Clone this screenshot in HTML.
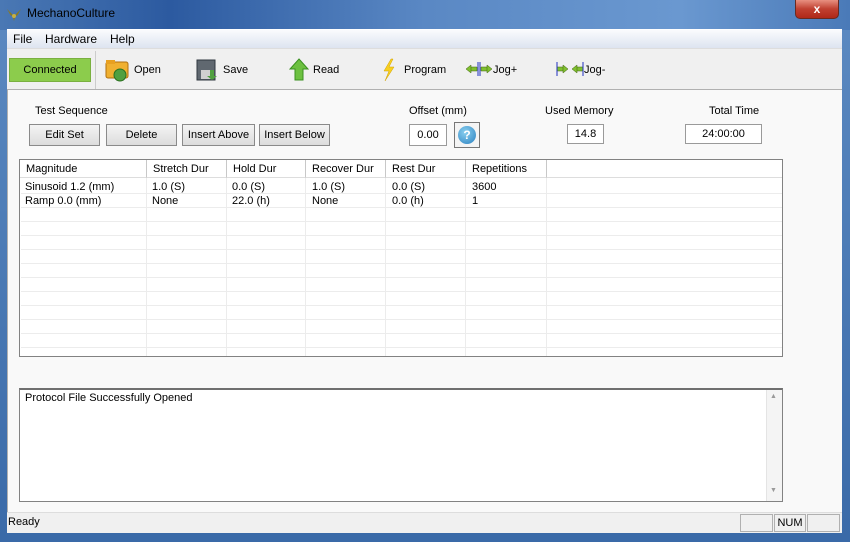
<!DOCTYPE html><html><head><style>
*{margin:0;padding:0;box-sizing:border-box}
body{width:850px;height:542px;overflow:hidden;font-family:"Liberation Sans",sans-serif;font-size:11px;color:#000;position:relative;background:#2a5a9a}
.a{position:absolute}
.title{left:0;top:0;width:850px;height:30px;background:linear-gradient(90deg,#4a78b4 0%,#2c5aa0 20%,#5a88c4 50%,#6a98d0 80%,#4a7ab8 100%)}
.frameb{left:0;top:30px;width:850px;height:512px;background:linear-gradient(#5a88c0,#3a6aa8)}
.btn{border:1px solid #8a8a8a;background:linear-gradient(#f4f4f4,#dcdcdc);text-align:center;line-height:20px;height:22px;font-size:11px}
.box{border:1px solid #9a9a9a;background:#fff;text-align:center;line-height:18px;height:20px}
.hd{top:160px;height:18px;line-height:18px;font-size:11px;padding-left:6px;border-right:1px solid #c8c8c8;background:#fff;border-bottom:1px solid #ddd}
.vl{top:178px;height:178px;width:1px;background:#ececec}
.hl{left:21px;width:761px;height:1px;background:#ececec}
.t{font-size:11px;line-height:14px}
</style></head><body>
<div class="a title"></div>
<div class="a frameb"></div>
<svg class="a" style="left:6px;top:8px" width="16" height="14"><path d="M1 1 L6 6 L8 13 L10 6 L15 1 L11 8 L8 6 L5 8Z" fill="#8a7a20"/><circle cx="8" cy="8" r="2" fill="#c8b040"/></svg>
<div class="a" style="left:27px;top:6px;font-size:12px;color:#000">MechanoCulture</div>
<div class="a" style="left:795px;top:0;width:44px;height:19px;border:1px solid #6a2a20;border-top:none;border-radius:0 0 5px 5px;background:linear-gradient(#e89080,#c04030 50%,#b02818);color:#fff;text-align:center;font-weight:bold;font-size:12px;line-height:18px">x</div>
<div class="a" style="left:7px;top:29px;width:835px;height:19px;background:linear-gradient(#fafbfd,#dde4f0);border-top:1px solid #fff"></div>
<div class="a" style="left:13px;top:32px;font-size:12px">File</div>
<div class="a" style="left:45px;top:32px;font-size:12px">Hardware</div>
<div class="a" style="left:110px;top:32px;font-size:12px">Help</div>
<div class="a" style="left:7px;top:48px;width:835px;height:41px;background:#f0f0f0;border-top:1px solid #ddd"></div>
<div class="a" style="left:58px;top:51px;width:1px;height:38px;background:#ccc;left:95px"></div>
<div class="a" style="left:9px;top:58px;width:82px;height:24px;background:#8ccc4c;border:1px solid #7ab040;text-align:center;line-height:22px;font-size:11px">Connected</div>
<svg class="a" style="left:105px;top:58px" width="26" height="24"><rect x="1" y="4" width="22" height="16" rx="2" fill="#f0b030" stroke="#b07010"/><rect x="1" y="2" width="9" height="4" fill="#e8a020"/><circle cx="15" cy="17" r="6" fill="#50a040" stroke="#2a7020"/></svg>
<div class="a" style="left:134px;top:64px;font-size:11px">Open</div>
<svg class="a" style="left:196px;top:58px" width="22" height="24"><rect x="1" y="2" width="18" height="20" fill="#606870" stroke="#303840"/><rect x="5" y="12" width="10" height="9" fill="#d0d0d0"/><path d="M14 12 v6 h-3 l5 4 l5-4 h-3 v-6z" fill="#50a040"/></svg>
<div class="a" style="left:223px;top:64px;font-size:11px">Save</div>
<svg class="a" style="left:289px;top:58px" width="20" height="24"><path d="M10 1 L19 11 H14 V22 H6 V11 H1Z" fill="#6cc040" stroke="#3a9020"/></svg>
<div class="a" style="left:313px;top:64px;font-size:11px">Read</div>
<svg class="a" style="left:381px;top:58px" width="16" height="24"><path d="M10 1 L3 13 H8 L4 23 L13 9 H8 L12 1Z" fill="#f8d020" stroke="#d0a000" stroke-width=".5"/></svg>
<div class="a" style="left:404px;top:64px;font-size:11px">Program</div>
<svg class="a" style="left:465px;top:62px" width="28" height="14"><path d="M1 7 L6 3 V11Z M6 5 H12 V9 H6" fill="#80c030" stroke="#406010" stroke-width=".5"/><path d="M27 7 L22 3 V11Z M22 5 H16 V9 H22" fill="#80c030" stroke="#406010" stroke-width=".5"/><line x1="13" y1="0" x2="13" y2="14" stroke="#2030c0"/><line x1="15" y1="0" x2="15" y2="14" stroke="#2030c0"/></svg>
<div class="a" style="left:493px;top:64px;font-size:11px">Jog+</div>
<svg class="a" style="left:556px;top:62px" width="28" height="14"><path d="M12 7 L7 3 V11Z M7 5 H1 V9 H7" fill="#80c030" stroke="#406010" stroke-width=".5"/><path d="M16 7 L21 3 V11Z M21 5 H27 V9 H21" fill="#80c030" stroke="#406010" stroke-width=".5"/><line x1="1" y1="0" x2="1" y2="14" stroke="#2030c0"/><line x1="27" y1="0" x2="27" y2="14" stroke="#2030c0"/></svg>
<div class="a" style="left:584px;top:64px;font-size:11px">Jog-</div>
<div class="a" style="left:7px;top:89px;width:835px;height:423px;background:#f9f9f9;border-top:1px solid #b0b0b0;border-left:1px solid #b0b0b0"></div>
<div class="a" style="left:35px;top:105px;font-size:11px">Test Sequence</div>
<div class="a btn" style="left:29px;top:124px;width:71px">Edit Set</div>
<div class="a btn" style="left:106px;top:124px;width:71px">Delete</div>
<div class="a btn" style="left:182px;top:124px;width:73px">Insert Above</div>
<div class="a btn" style="left:259px;top:124px;width:71px">Insert Below</div>
<div class="a" style="left:409px;top:105px;font-size:11px">Offset (mm)</div>
<div class="a box" style="left:409px;top:124px;width:38px;height:22px;line-height:20px">0.00</div>
<div class="a" style="left:454px;top:122px;width:26px;height:26px;border:1px solid #777;background:#f4f4f4"></div>
<div class="a" style="left:458px;top:126px;width:18px;height:18px;border-radius:50%;background:radial-gradient(circle at 40% 35%,#8ad0f0,#2a80c0);color:#fff;font-weight:bold;text-align:center;line-height:18px;font-size:12px">?</div>
<div class="a" style="left:545px;top:105px;font-size:11px">Used Memory</div>
<div class="a box" style="left:567px;top:124px;width:37px">14.8</div>
<div class="a" style="left:709px;top:105px;font-size:11px">Total Time</div>
<div class="a box" style="left:685px;top:124px;width:77px">24:00:00</div>
<div class="a" style="left:19px;top:159px;width:764px;height:198px;background:#fff;border:1px solid #828282"></div>
<div class="a hd" style="left:20px;width:127px">Magnitude</div>
<div class="a hd" style="left:147px;width:80px">Stretch Dur</div>
<div class="a hd" style="left:227px;width:79px">Hold Dur</div>
<div class="a hd" style="left:306px;width:80px">Recover Dur</div>
<div class="a hd" style="left:386px;width:80px">Rest Dur</div>
<div class="a hd" style="left:466px;width:81px">Repetitions</div>
<div class="a hd" style="left:547px;width:235px;border-right:none"></div>
<div class="a vl" style="left:146px"></div><div class="a vl" style="left:226px"></div><div class="a vl" style="left:305px"></div><div class="a vl" style="left:385px"></div><div class="a vl" style="left:465px"></div><div class="a vl" style="left:546px"></div>
<div class="a hl" style="top:193px"></div><div class="a hl" style="top:207px"></div><div class="a hl" style="top:221px"></div><div class="a hl" style="top:235px"></div><div class="a hl" style="top:249px"></div><div class="a hl" style="top:263px"></div><div class="a hl" style="top:277px"></div><div class="a hl" style="top:291px"></div><div class="a hl" style="top:305px"></div><div class="a hl" style="top:319px"></div><div class="a hl" style="top:333px"></div><div class="a hl" style="top:347px"></div>
<div class="a t" style="left:25px;top:180px">Sinusoid 1.2 (mm)</div>
<div class="a t" style="left:152px;top:180px">1.0 (S)</div>
<div class="a t" style="left:232px;top:180px">0.0 (S)</div>
<div class="a t" style="left:312px;top:180px">1.0 (S)</div>
<div class="a t" style="left:392px;top:180px">0.0 (S)</div>
<div class="a t" style="left:472px;top:180px">3600</div>
<div class="a t" style="left:25px;top:194px">Ramp 0.0 (mm)</div>
<div class="a t" style="left:152px;top:194px">None</div>
<div class="a t" style="left:232px;top:194px">22.0 (h)</div>
<div class="a t" style="left:312px;top:194px">None</div>
<div class="a t" style="left:392px;top:194px">0.0 (h)</div>
<div class="a t" style="left:472px;top:194px">1</div>
<div class="a" style="left:19px;top:388px;width:764px;height:114px;background:#fff;border:1px solid #828282;border-top:2px solid #707070"></div>
<div class="a" style="left:766px;top:390px;width:16px;height:111px;background:#f4f4f4;border-left:1px solid #e4e4e4"></div>
<div class="a" style="left:770px;top:393px;font-size:7px;color:#999">▲</div>
<div class="a" style="left:770px;top:487px;font-size:7px;color:#999">▼</div>
<div class="a t" style="left:25px;top:391px">Protocol File Successfully Opened</div>
<div class="a" style="left:7px;top:512px;width:835px;height:21px;background:#f0f0f0;border-top:1px solid #ddd"></div>
<div class="a" style="left:8px;top:516px;font-size:11px">Ready</div>
<div class="a" style="left:740px;top:514px;width:33px;height:18px;border:1px solid #b0b0b0"></div>
<div class="a" style="left:774px;top:514px;width:32px;height:18px;border:1px solid #b0b0b0;line-height:16px;text-align:center">NUM</div>
<div class="a" style="left:807px;top:514px;width:33px;height:18px;border:1px solid #b0b0b0"></div>
</body></html>
